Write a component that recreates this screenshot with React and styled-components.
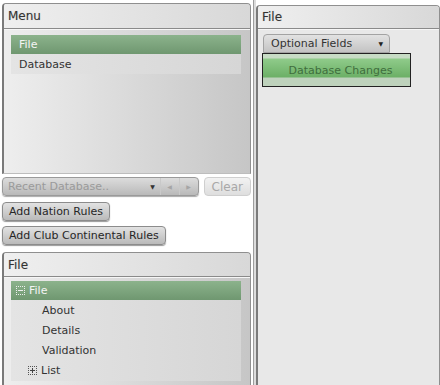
import React from "react";
import styled, { createGlobalStyle } from "styled-components";

const Global = createGlobalStyle`
  html, body { margin: 0; padding: 0; background: #fff; }
  body { font-family: "DejaVu Sans", "Liberation Sans", sans-serif; font-size: 11px; color: #333; }
`;

const Screen = styled.div`
  width: 440px;
  height: 385px;
  display: flex;
  background: #fff;
  overflow: hidden;
`;

const LeftCol = styled.div`
  width: 251px;
  display: flex;
  flex-direction: column;
`;

const Panel = styled.div`
  margin: ${(p) => p.$margin || "0"};
  height: ${(p) => p.$height || "auto"};
  flex: ${(p) => (p.$grow ? 1 : "none")};
  display: flex;
  flex-direction: column;
  border: 1px solid #8f8f8f;
  border-left: 2px solid #7a7a7a;
  border-bottom: ${(p) => (p.$noBottom ? "none" : "1px solid #bdbdbd")};
  border-radius: 4px 4px 0 0;
  background: ${(p) => p.$bg || "linear-gradient(to right, #eeeeee, #c6c6c6)"};
  overflow: hidden;
`;

const Header = styled.div`
  height: ${(p) => p.$h || 23}px;
  display: flex;
  align-items: center;
  padding-left: 4px;
  background: linear-gradient(to right, #efefef, #d8d8d8);
  border-bottom: 1px solid #8a8a8a;
  box-shadow: 0 1px 0 #f6f6f6;
  font-size: 12px;
  color: #333;
  text-shadow: 0 0 1px #bbb;
`;

const List = styled.div`
  margin: ${(p) => p.$margin || "6px 9px 0 7px"};
  display: flex;
  flex-direction: column;
  background: linear-gradient(to right, #e4e4e4, #d6d6d6);
  flex: ${(p) => (p.$grow ? 1 : "none")};
`;

const Row = styled.div`
  height: ${(p) => p.$h || 19}px;
  flex: none;
  display: flex;
  align-items: center;
  padding-left: ${(p) => p.$indent || 8}px;
  gap: 4px;
  color: ${(p) => (p.$selected ? "#f4f4f4" : "#333")};
  background: ${(p) =>
    p.$selected ? "linear-gradient(to bottom, #8cb38c, #6f9770)" : "transparent"};
`;

const Expander = styled.span`
  width: 7px;
  height: 7px;
  border: 1px dotted ${(p) => (p.$light ? "#eee" : "#555")};
  position: relative;
  display: inline-block;
  &::before {
    content: "";
    position: absolute;
    left: 1px;
    right: 1px;
    top: 3px;
    height: 1px;
    background: ${(p) => (p.$light ? "#eee" : "#444")};
  }
  &::after {
    content: "";
    display: ${(p) => (p.$plus ? "block" : "none")};
    position: absolute;
    top: 1px;
    bottom: 1px;
    left: 3px;
    width: 1px;
    background: #444;
  }
`;

const ControlRow = styled.div`
  display: flex;
  align-items: center;
  gap: 5px;
  margin: 3px 0 0 2px;
`;

const Combo = styled.div`
  width: 196px;
  height: 17px;
  display: flex;
  align-items: center;
  border: 1px solid #9a9a9a;
  border-radius: 4px;
  background: linear-gradient(to bottom, #dcdcdc, #b9b9b9);
  color: #9a9a9a;
  box-shadow: 0 1px 1px #aaa;
`;

const ComboText = styled.span`
  flex: 1;
  padding-left: 5px;
  white-space: nowrap;
`;

const ComboSeg = styled.span`
  width: ${(p) => p.$w}px;
  height: 100%;
  display: flex;
  align-items: center;
  justify-content: center;
  font-size: 6px;
  color: ${(p) => p.$c || "#a5a5a5"};
  border-left: ${(p) => (p.$sep ? "1px solid #c9c9c9" : "none")};
`;

const Button = styled.div`
  height: 17px;
  display: inline-flex;
  align-items: center;
  align-self: flex-start;
  padding: 0 ${(p) => (p.$disabled ? 7 : 6)}px;
  margin: ${(p) => p.$margin || "0"};
  border: 1px solid ${(p) => (p.$disabled ? "#cfcfcf" : "#8c8c8c")};
  border-radius: 4px;
  background: ${(p) =>
    p.$disabled
      ? "linear-gradient(to bottom, #f2f2f2, #dedede)"
      : "linear-gradient(to bottom, #e2e2e2, #bababa)"};
  color: ${(p) => (p.$disabled ? "#a8a8a8" : "#262626")};
  font-size: ${(p) => (p.$disabled ? 12 : 11)}px;
  box-shadow: ${(p) => (p.$disabled ? "none" : "0 1px 1px #999")};
  white-space: nowrap;
`;

const Splitter = styled.div`
  width: 5px;
  background: linear-gradient(to right, #ffffff 0, #ffffff 2px, #9d9d9d 2px, #9d9d9d 3px, #dcdcdc 3px);
`;

const RightCol = styled.div`
  flex: 1;
  display: flex;
  flex-direction: column;
  padding-top: 5px;
`;

const RightBody = styled.div`
  padding: 5px 0 0 5px;
  display: flex;
  flex-direction: column;
  align-items: flex-start;
`;

const FieldsCombo = styled.div`
  width: 112px;
  height: 17px;
  display: flex;
  align-items: center;
  justify-content: space-between;
  padding: 0 6px 0 7px;
  border: 1px solid #a3a3a3;
  border-radius: 4px 4px 0 0;
  background: linear-gradient(to bottom, #e2e2e2, #c3c3c3);
  color: #333;
  font-size: 11px;
`;

const Arrow = styled.span`
  font-size: 6px;
  color: #222;
`;

const Popup = styled.div`
  width: 149px;
  height: 34px;
  border: 1px solid #222;
  background: linear-gradient(to bottom, #c7dcc5 0, #c7dcc5 4px, #8fcb8a 5px, #6cb066 23px, #bed2bc 24px, #bed2bc 100%);
  display: flex;
  align-items: flex-start;
  justify-content: center;
  padding: 10px 0 0 8px;
  box-sizing: border-box;
  color: #3f6e3d;
  font-size: 11px;
  margin-left: -1px;
`;

export default function App() {
  return (
    <Screen>
      <Global />
      <LeftCol>
        <Panel $margin="3px 0 0 2px" $height="169px">
          <Header $h={24}>Menu</Header>
          <List>
            <Row $selected>File</Row>
            <Row $h={20}>Database</Row>
          </List>
        </Panel>
        <ControlRow>
          <Combo>
            <ComboText>Recent Database..</ComboText>
            <ComboSeg $w={14} $c="#333">▼</ComboSeg>
            <ComboSeg $w={18} $sep>◀</ComboSeg>
            <ComboSeg $w={18} $sep>▶</ComboSeg>
          </Combo>
          <Button $disabled>Clear</Button>
        </ControlRow>
        <Button $margin="6px 0 0 2px">Add Nation Rules</Button>
        <Button $margin="5px 0 0 2px">Add Club Continental Rules</Button>
        <Panel $margin="7px 0 0 2px" $grow $noBottom>
          <Header>File</Header>
          <List $grow $margin="4px 9px 4px 7px">
            <Row $selected $indent={5}>
              <Expander $light />
              <span>File</span>
            </Row>
            <Row $indent={31} $h={20}>About</Row>
            <Row $indent={31} $h={20}>Details</Row>
            <Row $indent={31} $h={20}>Validation</Row>
            <Row $indent={17} $h={20}>
              <Expander $plus />
              <span>List</span>
            </Row>
          </List>
        </Panel>
      </LeftCol>
      <Splitter />
      <RightCol>
        <Panel $grow $noBottom $bg="#e8e8e8">
          <Header $h={22}>File</Header>
          <RightBody>
            <FieldsCombo>
              <span>Optional Fields</span>
              <Arrow>▼</Arrow>
            </FieldsCombo>
            <Popup>Database Changes</Popup>
          </RightBody>
        </Panel>
      </RightCol>
    </Screen>
  );
}
